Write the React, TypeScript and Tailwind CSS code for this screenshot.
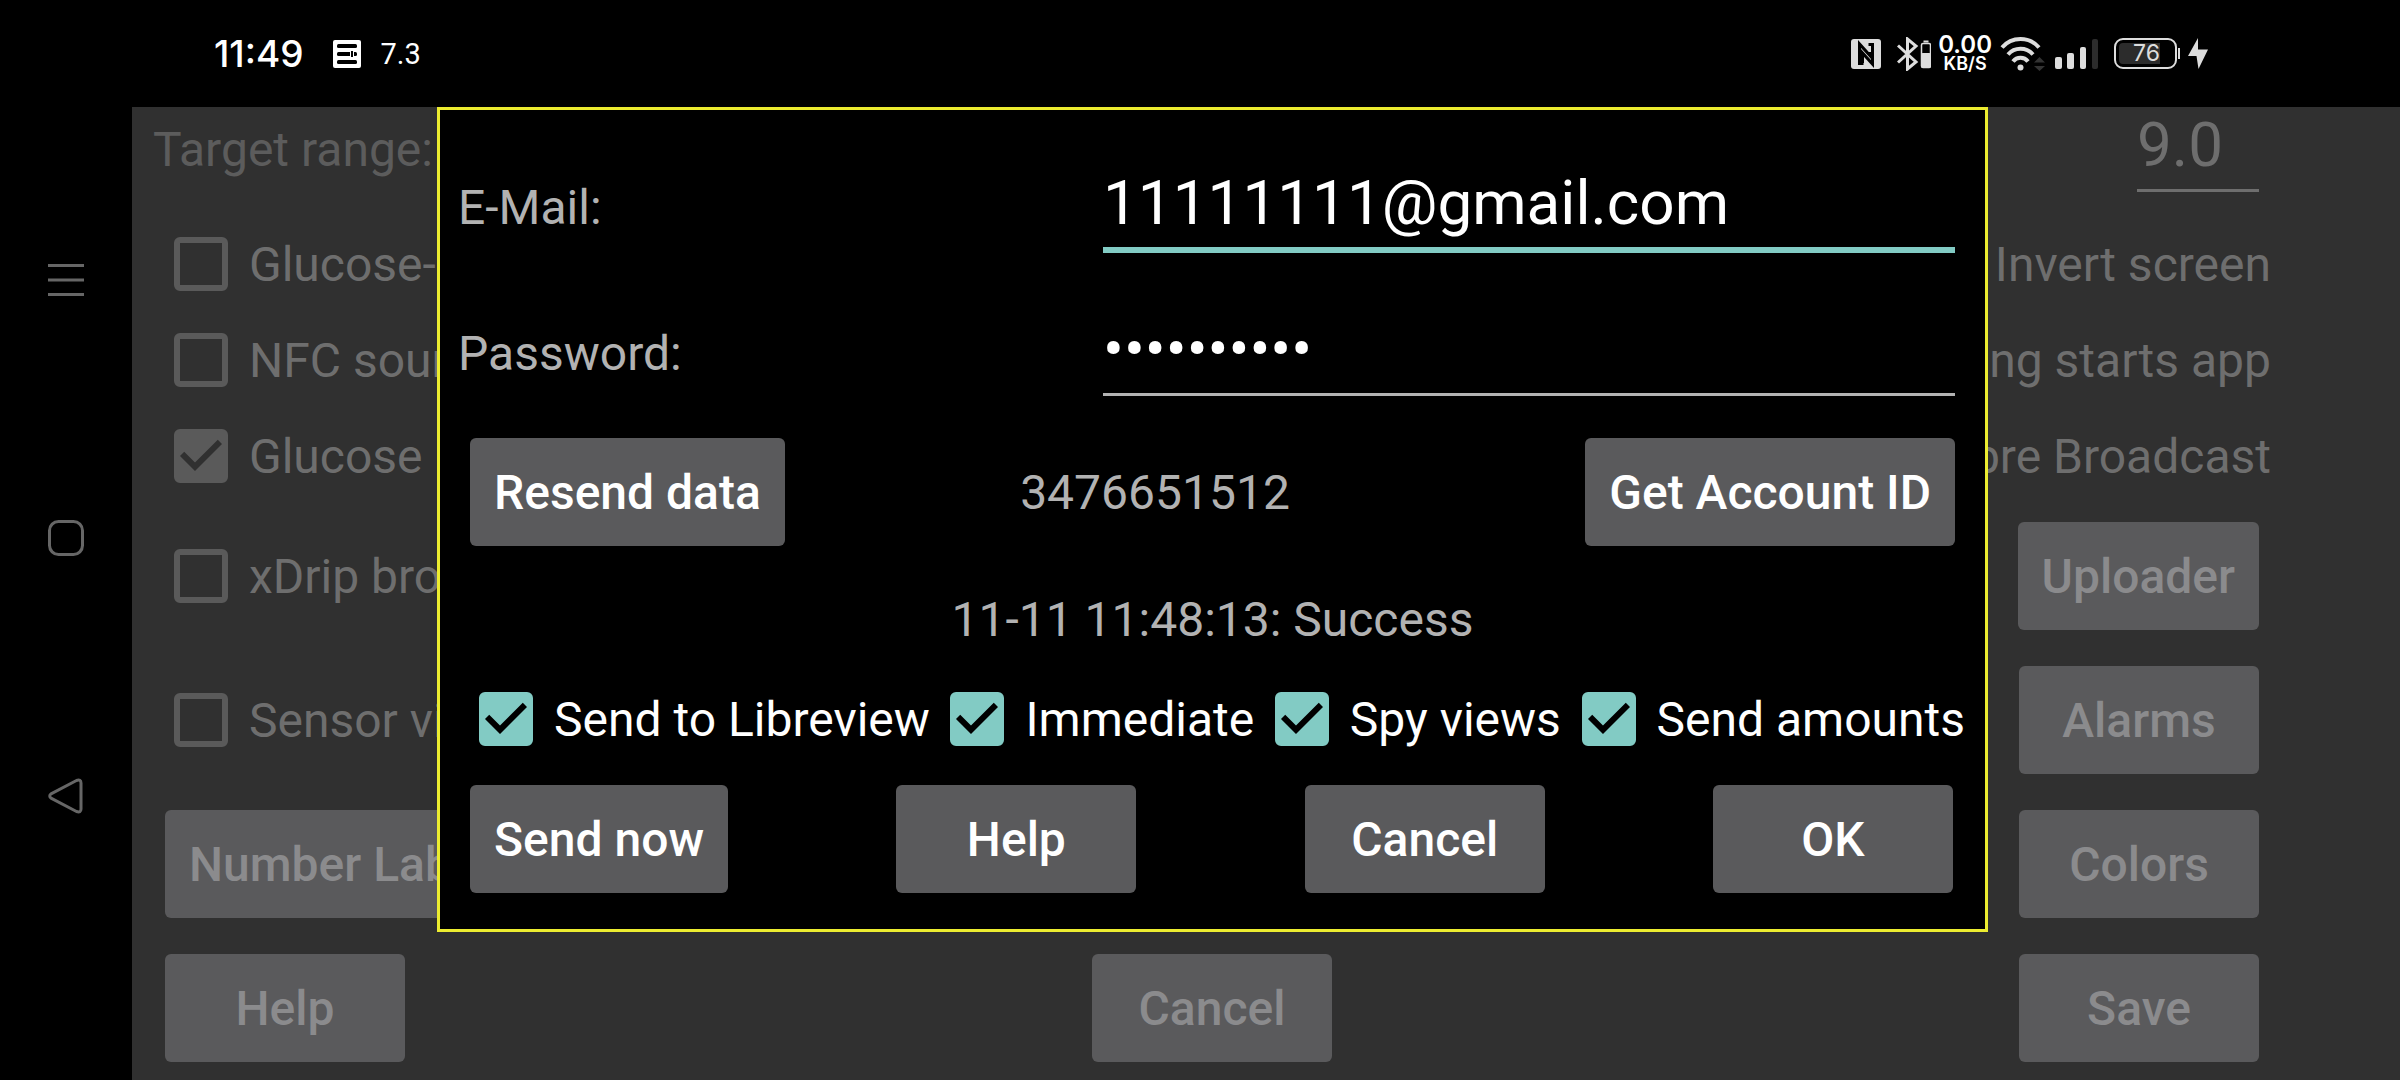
import { useState } from "react";

const buttonBase =
  "h-[108px] min-w-60 shrink-0 rounded-[6px] bg-[#5a5a5c] px-6 pt-[2px] text-[48px]/[56px] font-medium whitespace-nowrap";

function DialogButton({ children }: { children: string }) {
  return (
    <button type="button" className={`${buttonBase} text-white`}>
      {children}
    </button>
  );
}

function DimButton({ children }: { children: string }) {
  return (
    <button type="button" className={`${buttonBase} text-[#8b8b8d]`}>
      {children}
    </button>
  );
}

function CheckMark({ className }: { className: string }) {
  return (
    <svg viewBox="3 3 18 18" className={className} aria-hidden="true">
      <path d="M10,17L5,12l1.41,-1.41L10,14.17l7.59,-7.59L19,8l-9,9z" />
    </svg>
  );
}

function DimCheck({ label, initial = false }: { label: string; initial?: boolean }) {
  const [checked, setChecked] = useState(initial);
  return (
    <label className="flex items-center gap-[21px] pl-[9px] whitespace-nowrap">
      <span className="grid shrink-0">
        <input
          type="checkbox"
          checked={checked}
          onChange={(e) => setChecked(e.target.checked)}
          className="size-[54px] appearance-none rounded-[6px] border-6 border-[#5a5a5a] [grid-area:1/1] checked:bg-[#5a5a5a]"
        />
        {checked && (
          <CheckMark className="pointer-events-none size-[54px] fill-[#303030] [grid-area:1/1]" />
        )}
      </span>
      <span className="pt-[2px]">{label}</span>
    </label>
  );
}

function TealCheck({ label }: { label: string }) {
  const [checked, setChecked] = useState(true);
  return (
    <label className="flex items-center gap-[21px] whitespace-nowrap">
      <span className="grid shrink-0">
        <input
          type="checkbox"
          checked={checked}
          onChange={(e) => setChecked(e.target.checked)}
          className="size-[54px] appearance-none rounded-[6px] border-6 border-[#82cbc4] [grid-area:1/1] checked:bg-[#82cbc4]"
        />
        {checked && (
          <CheckMark className="pointer-events-none size-[54px] fill-black [grid-area:1/1]" />
        )}
      </span>
      <span className="pt-[2px]">{label}</span>
    </label>
  );
}

function NavRail() {
  return (
    <nav className="flex w-[132px] shrink-0 flex-col items-center justify-center gap-[222px] pb-1">
      <button type="button" aria-label="Recent apps">
        <svg viewBox="0 0 36 36" className="size-9 stroke-[#666]" strokeWidth="3">
          <path d="M0 3.500h36M0 18h36M0 32.500h36" />
        </svg>
      </button>
      <button type="button" aria-label="Home">
        <svg viewBox="0 0 36 36" className="size-9 fill-none stroke-[#666]" strokeWidth="3">
          <rect x="1.500" y="1.500" width="33" height="33" rx="9" />
        </svg>
      </button>
      <button type="button" aria-label="Back">
        <svg
          viewBox="0 0 36 36"
          className="size-9 fill-none stroke-[#666]"
          strokeWidth="3"
          strokeLinejoin="round"
        >
          <path d="M3 15.800L28.500 2.500Q33 1 33 5V31Q33 35 28.500 33.500L3 20.200Q0.500 18 3 15.800Z" />
        </svg>
      </button>
    </nav>
  );
}

function StatusBar() {
  return (
    <header className="flex h-[107px] shrink-0 items-center justify-between pr-48 pl-[82px] font-['Inter',sans-serif] text-white">
      <div className="flex items-center">
        <span className="text-[37px]/[36px] font-medium">11:49</span>
        <svg viewBox="0 0 28 28" className="ml-[29px] size-7" aria-hidden="true">
          <rect width="28" height="28" rx="2" fill="#fff" />
          <g fill="#000">
            <rect x="4" y="4" width="20" height="4" rx="1.500" />
            <rect x="4" y="12" width="20" height="4" rx="1.500" />
            <rect x="4" y="20" width="20" height="4" rx="1.500" />
          </g>
          <rect x="17.500" y="10.500" width="3" height="7" fill="#000" stroke="#fff" />
        </svg>
        <span className="ml-5 font-['Roboto',sans-serif] text-[29px]/[36px]">7.3</span>
      </div>

      <div className="flex items-center">
        <svg viewBox="0 0 30 30" className="size-[30px]" aria-hidden="true">
          <rect width="30" height="30" rx="3" fill="#ddd" />
          <g fill="none" stroke="#000" strokeWidth="3">
            <path d="M12.500 24.500H8.500V5L18.500 16V13" />
            <path d="M17.500 5.500H21.500V25L11.500 14V24" />
          </g>
        </svg>
        <svg viewBox="0 0 34 34" className="ml-4 h-[34px] w-[34px]" aria-hidden="true">
          <path
            d="M1 8.500L19 25L10.500 32V2L19 9L1 25.500"
            fill="none"
            stroke="#ddd"
            strokeWidth="3"
          />
          <rect x="24.500" y="6.500" width="9" height="24" rx="1.500" fill="none" stroke="#ddd" strokeWidth="1.500" />
          <rect x="24" y="16" width="10" height="14.500" rx="1.500" fill="#ddd" />
          <rect x="26.500" y="3.500" width="5" height="2" fill="#ddd" />
        </svg>
        <span className="ml-[7px] flex flex-col items-center font-semibold">
          <span className="text-[24px]/[20px]">0.00</span>
          <span className="text-[18px]/[18px]">KB/S</span>
        </span>
        <svg viewBox="0 0 46 34" className="ml-2 h-[34px] w-[46px]" aria-hidden="true">
          <g fill="none" stroke="#ddd" strokeWidth="4">
            <path d="M2 10.500A24.400 24.400 0 0 1 39 10.500" />
            <path d="M8 17.500A16.500 16.500 0 0 1 33 17.500" />
            <path d="M13 24.500A9.500 9.500 0 0 1 28 24.500" />
          </g>
          <circle cx="20.500" cy="30.500" r="3" fill="#ddd" />
          <path d="M34 25.500h11l-5.500-5.500zM34 29h11l-5.500 5z" fill="#333" />
        </svg>
        <svg viewBox="0 0 43 30" className="ml-[9px] h-[30px] w-[43px]" aria-hidden="true">
          <g fill="#ddd">
            <rect y="18" width="7" height="12" rx="2" />
            <rect x="12" y="14" width="7" height="16" rx="2" />
            <rect x="25" y="8" width="6" height="22" rx="2" />
          </g>
          <rect x="37" width="6" height="30" rx="2" fill="#2c2c2c" />
        </svg>
        <span className="ml-4 flex items-center">
          <span className="flex h-[31px] w-[63px] rounded-[9px] border-2 border-[#ddd] p-[3px]">
            <span className="flex h-full w-[41px] items-center justify-end rounded-l-[4px] bg-[#2c2c2c] text-[23px]/[21px] text-[#ddd]">
              76
            </span>
          </span>
          <span className="ml-px h-[11px] w-[2px] bg-[#ddd]" />
        </span>
        <svg viewBox="0 0 20 31" className="ml-2 h-[31px] w-5 fill-[#ddd]" aria-hidden="true">
          <path d="M10 0L0 18H8.500L10.500 31L20 11.500H10Z" />
        </svg>
      </div>
    </header>
  );
}

function SettingsPage() {
  const checkRow = "flex h-24 items-center justify-between pr-[129px] pl-[33px]";
  const buttonRow = "flex h-36 items-center justify-between pr-[141px] pl-[33px]";
  return (
    <div className="text-[48px]/[56px] text-[#6e6e6e]">
      <div className="flex h-[109px] items-baseline justify-between pt-[2px] pr-[141px] pl-[21px]">
        <label htmlFor="target-high" className="text-[#5c5c5c]">
          Target range:
        </label>
        <input
          id="target-high"
          defaultValue="9.0"
          className="h-[83px] w-[122px] border-b-3 border-[#6e6e6e] pb-[10px] text-[62px]/[70px]"
        />
      </div>
      <div className={checkRow}>
        <DimCheck label="Glucose-" />
        <span className="pt-[2px]">Invert screen</span>
      </div>
      <div className={checkRow}>
        <DimCheck label="NFC sound" />
        <span className="pt-[2px]">Scanning starts app</span>
      </div>
      <div className={checkRow}>
        <DimCheck label="Glucose" initial />
        <span className="pt-[2px]">Libre Broadcast</span>
      </div>
      <div className={buttonRow}>
        <DimCheck label="xDrip broadcast" />
        <DimButton>Uploader</DimButton>
      </div>
      <div className={buttonRow}>
        <DimCheck label="Sensor via" />
        <DimButton>Alarms</DimButton>
      </div>
      <div className={buttonRow}>
        <DimButton>Number Labels</DimButton>
        <DimButton>Colors</DimButton>
      </div>
      <div className={buttonRow}>
        <DimButton>Help</DimButton>
        <DimButton>Cancel</DimButton>
        <DimButton>Save</DimButton>
      </div>
    </div>
  );
}

function LibreviewDialog() {
  return (
    <form
      role="dialog"
      aria-label="Libreview"
      onSubmit={(e) => e.preventDefault()}
      className="absolute top-0 right-[412px] left-[305px] border-3 border-[#ecec30] bg-black pt-[57px] pb-9 text-[48px]/[56px] text-[#b2b2b2]"
    >
      <div className="flex items-baseline justify-between pr-[30px] pl-[18px]">
        <label htmlFor="email">E-Mail:</label>
        <input
          id="email"
          type="email"
          defaultValue="11111111@gmail.com"
          className="h-[86px] w-[852px] border-b-6 border-[#82cbc4] pb-[10px] text-[62px]/[70px] text-white outline-none"
        />
      </div>
      <div className="mt-[60px] flex items-baseline justify-between pr-[30px] pl-[18px]">
        <label htmlFor="password">Password:</label>
        <input
          id="password"
          type="password"
          defaultValue="1234567890"
          className="h-[83px] w-[852px] border-b-3 border-[#b2b2b2] pb-[10px] text-[62px]/[70px] text-white outline-none"
        />
      </div>
      <div className="mt-[42px] flex items-center justify-between px-[30px]">
        <DialogButton>Resend data</DialogButton>
        <span className="pt-[2px] pr-[60px]">3476651512</span>
        <DialogButton>Get Account ID</DialogButton>
      </div>
      <p className="mt-[46px] text-center">11-11 11:48:13: Success</p>
      <div className="mt-[42px] flex items-center justify-between pr-5 pl-[39px] text-white">
        <TealCheck label="Send to Libreview" />
        <TealCheck label="Immediate" />
        <TealCheck label="Spy views" />
        <TealCheck label="Send amounts" />
      </div>
      <div className="mt-[37px] flex items-center justify-between pr-8 pl-[30px]">
        <DialogButton>Send now</DialogButton>
        <DialogButton>Help</DialogButton>
        <DialogButton>Cancel</DialogButton>
        <DialogButton>OK</DialogButton>
      </div>
    </form>
  );
}

export default function App() {
  return (
    <div className="flex min-h-screen bg-black font-['Roboto',sans-serif]">
      <NavRail />
      <div className="flex min-w-0 flex-1 flex-col">
        <StatusBar />
        <main className="relative flex-1 bg-[#303030]">
          <SettingsPage />
          <LibreviewDialog />
        </main>
      </div>
    </div>
  );
}
